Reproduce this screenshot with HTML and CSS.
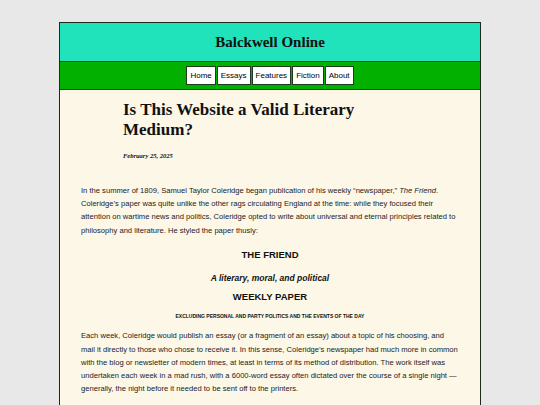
FILE: index.html
```html
<!DOCTYPE html>
<html>
<head>
<meta charset="utf-8">
<link rel="stylesheet" href="styles.css">
</head>
<body>
<div class="page">
  <header class="masthead">
    <h1 class="site-title">Balckwell Online</h1>
  </header>
  <nav class="nav">
    <a class="nav-item">Home</a>
    <a class="nav-item">Essays</a>
    <a class="nav-item">Features</a>
    <a class="nav-item">Fiction</a>
    <a class="nav-item">About</a>
  </nav>
  <main class="content">
    <div class="article-head">
      <h2 class="article-title">Is This Website a Valid Literary Medium?</h2>
      <p class="date">February 25, 2025</p>
    </div>
    <p class="para first">In the summer of 1809, Samuel Taylor Coleridge began publication of his weekly “newspaper,” <i>The Friend</i>. Coleridge’s paper was quite unlike the other rags circulating England at the time: while they focused their attention on wartime news and politics, Coleridge opted to write about universal and eternal principles related to philosophy and literature. He styled the paper thusly:</p>
    <div class="masthead-quote">
      <p class="q-title">THE FRIEND</p>
      <p class="q-sub">A literary, moral, and political</p>
      <p class="q-weekly">WEEKLY PAPER</p>
      <p class="q-small">EXCLUDING PERSONAL AND PARTY POLITICS AND THE EVENTS OF THE DAY</p>
    </div>
    <p class="para second">Each week, Coleridge would publish an essay (or a fragment of an essay) about a topic of his choosing, and mail it directly to those who chose to receive it. In this sense, Coleridge’s newspaper had much more in common with the blog or newsletter of modern times, at least in terms of its method of distribution. The work itself was undertaken each week in a mad rush, with a 6000-word essay often dictated over the course of a single night — generally, the night before it needed to be sent off to the printers.</p>
  </main>
</div>
</body>
</html>
```
FILE: styles.css
```css
html, body {
  margin: 0;
  padding: 0;
  background: #e8e8e8;
}
body {
  padding-top: 22px;
  font-family: "Liberation Sans", Arial, sans-serif;
}
.page {
  width: 420px;
  margin: 0 auto;
  border: 1px solid #1c2a1c;
  border-bottom: none;
  background: #fdf7e7;
  min-height: 400px;
}
.masthead {
  background: #21e3bb;
  height: 38px;
  display: flex;
  align-items: center;
  justify-content: center;
  border-bottom: 1px solid #14532d;
}
.site-title {
  margin: 0;
  font-family: "Liberation Serif", "Times New Roman", serif;
  font-weight: bold;
  font-size: 15px;
  color: #111;
}
.nav {
  background: #02b000;
  height: 27px;
  display: flex;
  justify-content: center;
  align-items: center;
  gap: 1px;
  border-bottom: 1px solid #1d4d1d;
}
.nav-item {
  display: block;
  background: #fff;
  border: 1px solid #1f3b1f;
  height: 17px;
  line-height: 17px;
  padding: 0 3px;
  font-size: 8px;
  color: #000;
}
.content {
  padding: 10px 21px 20px 21px;
}
.article-head {
  padding: 0 42px;
}
.article-title {
  margin: 0;
  font-family: "Liberation Serif", "Times New Roman", serif;
  font-weight: bold;
  font-size: 17px;
  line-height: 19.5px;
  color: #111;
  width: 260px;
}
.date {
  margin: 13px 0 0 0;
  font-family: "Liberation Serif", "Times New Roman", serif;
  font-weight: bold;
  font-style: italic;
  font-size: 6.5px;
  color: #111;
}
.para {
  margin: 0;
  font-size: 7.6px;
  line-height: 13.2px;
  color: #222;
}
.para.first {
  margin-top: 25px;
}
.masthead-quote {
  text-align: center;
  color: #111;
  margin-top: 12px;
}
.masthead-quote p {
  margin: 0;
  font-weight: bold;
}
.q-title {
  font-size: 9.5px;
}
.q-sub {
  font-style: italic;
  font-size: 8.5px;
  margin-top: 13px !important;
}
.q-weekly {
  font-size: 9.5px;
  margin-top: 8.5px !important;
}
.q-small {
  font-size: 5px;
  margin-top: 11px !important;
}
.para.second {
  margin-top: 10px;
}
```
